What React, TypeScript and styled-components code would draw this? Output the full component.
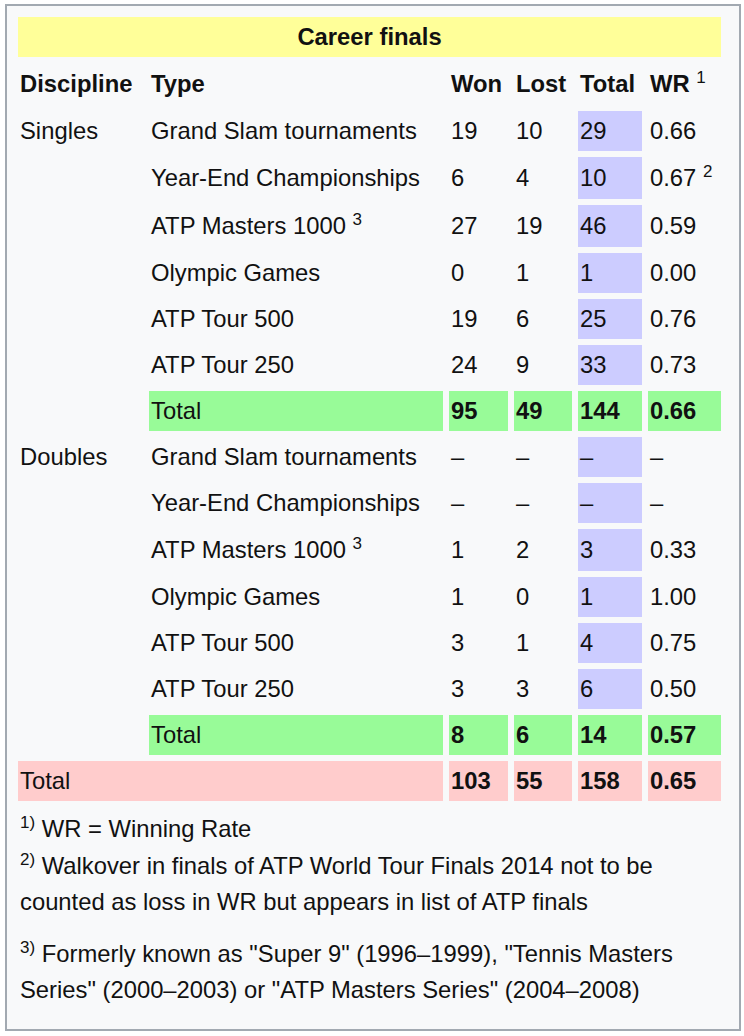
import React from "react";
import styled, { createGlobalStyle } from "styled-components";

const GlobalStyle = createGlobalStyle`
  body {
    margin: 0;
    background: #ffffff;
    font-family: "Liberation Sans", Helvetica, Arial, sans-serif;
    color: #111111;
  }
`;

type Tone = "plain" | "total" | "sub" | "grand";

interface FinalsRow {
  type: string;
  note?: string;
  won: string;
  lost: string;
  total: string;
  wr: string;
  wrNote?: string;
}

interface Discipline {
  name: string;
  rows: FinalsRow[];
  sum: { won: string; lost: string; total: string; wr: string };
}

const DISCIPLINES: Discipline[] = [
  {
    name: "Singles",
    rows: [
      { type: "Grand Slam tournaments", won: "19", lost: "10", total: "29", wr: "0.66" },
      { type: "Year-End Championships", won: "6", lost: "4", total: "10", wr: "0.67", wrNote: "2" },
      { type: "ATP Masters 1000", note: "3", won: "27", lost: "19", total: "46", wr: "0.59" },
      { type: "Olympic Games", won: "0", lost: "1", total: "1", wr: "0.00" },
      { type: "ATP Tour 500", won: "19", lost: "6", total: "25", wr: "0.76" },
      { type: "ATP Tour 250", won: "24", lost: "9", total: "33", wr: "0.73" },
    ],
    sum: { won: "95", lost: "49", total: "144", wr: "0.66" },
  },
  {
    name: "Doubles",
    rows: [
      { type: "Grand Slam tournaments", won: "–", lost: "–", total: "–", wr: "–" },
      { type: "Year-End Championships", won: "–", lost: "–", total: "–", wr: "–" },
      { type: "ATP Masters 1000", note: "3", won: "1", lost: "2", total: "3", wr: "0.33" },
      { type: "Olympic Games", won: "1", lost: "0", total: "1", wr: "1.00" },
      { type: "ATP Tour 500", won: "3", lost: "1", total: "4", wr: "0.75" },
      { type: "ATP Tour 250", won: "3", lost: "3", total: "6", wr: "0.50" },
    ],
    sum: { won: "8", lost: "6", total: "14", wr: "0.57" },
  },
];

const COLUMN_WIDTHS = [125, 294, 59, 58, 64, 73];

const toneColor: Record<Tone, string> = {
  plain: "transparent",
  total: "#ccccff",
  sub: "#98fb98",
  grand: "#ffcccc",
};

const App: React.FC = () => {
  return (
    <>
      <GlobalStyle />
      <Frame>
        <FinalsTable>
          <colgroup>
            {COLUMN_WIDTHS.map((w, i) => (
              <Col key={i} $w={w} />
            ))}
          </colgroup>
          <tbody>
            <Row>
              <TitleCell colSpan={6}>Career finals</TitleCell>
            </Row>
            <Row $tall>
              <HeadCell>Discipline</HeadCell>
              <HeadCell>Type</HeadCell>
              <HeadCell>Won</HeadCell>
              <HeadCell>Lost</HeadCell>
              <HeadCell>Total</HeadCell>
              <HeadCell>
                WR <Sup>1</Sup>
              </HeadCell>
            </Row>
            {DISCIPLINES.map((d) => (
              <React.Fragment key={d.name}>
                {d.rows.map((r, i) => (
                  <Row key={r.type} $tall={!!(r.note || r.wrNote)}>
                    {i === 0 && (
                      <DisciplineCell rowSpan={d.rows.length + 1}>{d.name}</DisciplineCell>
                    )}
                    <Cell>
                      {r.type}
                      {r.note && <> <Sup>{r.note}</Sup></>}
                    </Cell>
                    <Cell>{r.won}</Cell>
                    <Cell>{r.lost}</Cell>
                    <Cell $tone="total">{r.total}</Cell>
                    <Cell>
                      {r.wr}
                      {r.wrNote && <> <Sup>{r.wrNote}</Sup></>}
                    </Cell>
                  </Row>
                ))}
                <Row>
                  <Cell $tone="sub">Total</Cell>
                  <Cell $tone="sub" $bold>{d.sum.won}</Cell>
                  <Cell $tone="sub" $bold>{d.sum.lost}</Cell>
                  <Cell $tone="sub" $bold>{d.sum.total}</Cell>
                  <Cell $tone="sub" $bold>{d.sum.wr}</Cell>
                </Row>
              </React.Fragment>
            ))}
            <Row>
              <Cell $tone="grand" colSpan={2}>Total</Cell>
              <Cell $tone="grand" $bold>103</Cell>
              <Cell $tone="grand" $bold>55</Cell>
              <Cell $tone="grand" $bold>158</Cell>
              <Cell $tone="grand" $bold>0.65</Cell>
            </Row>
          </tbody>
        </FinalsTable>
        <Notes>
          <NoteBlock>
            <Sup>1)</Sup> WR = Winning Rate
            <br />
            <Sup>2)</Sup> Walkover in finals of ATP World Tour Finals 2014 not to be counted as loss
            in WR but appears in list of ATP finals
          </NoteBlock>
          <NoteBlock>
            <Sup>3)</Sup> Formerly known as "Super 9" (1996–1999), "Tennis Masters Series"
            (2000–2003) or "ATP Masters Series" (2004–2008)
          </NoteBlock>
        </Notes>
      </Frame>
    </>
  );
};

export default App;

const Frame = styled.div`
  box-sizing: border-box;
  margin: 4px 0 0 5px;
  width: 736px;
  height: 1027px;
  padding: 5px;
  background: #f8f9fa;
  border: 2px solid #a2a9b1;
  font-size: 23.8px;
`;

const FinalsTable = styled.table`
  table-layout: fixed;
  width: 715px;
  border-collapse: separate;
  border-spacing: 6px;
`;

const Col = styled.col<{ $w: number }>`
  width: ${({ $w }) => $w}px;
`;

const Row = styled.tr<{ $tall?: boolean }>`
  height: ${({ $tall }) => ($tall ? 42 : 40)}px;
`;

const TitleCell = styled.th`
  padding: 2px;
  line-height: 36px;
  background: #ffff99;
  text-align: center;
  font-weight: bold;
`;

const HeadCell = styled.th`
  padding: 2px;
  line-height: 36px;
  text-align: left;
  font-weight: bold;
  white-space: nowrap;
`;

const DisciplineCell = styled.td`
  padding: 2px;
  line-height: 36px;
  vertical-align: top;
  text-align: left;
`;

const Cell = styled.td<{ $tone?: Tone; $bold?: boolean }>`
  padding: 2px;
  line-height: 36px;
  text-align: left;
  white-space: nowrap;
  vertical-align: middle;
  background: ${({ $tone = "plain" }) => toneColor[$tone]};
  font-weight: ${({ $bold }) => ($bold ? "bold" : "normal")};
`;

const Sup = styled.sup`
  font-size: 17px;
  font-weight: normal;
  line-height: 0;
  vertical-align: 9px;
`;

const Notes = styled.div`
  box-sizing: border-box;
  width: 723px;
  margin-top: 4px;
  padding: 0 8px;
`;

const NoteBlock = styled.p`
  margin: 0 0 15px;
  line-height: 36.5px;
`;
